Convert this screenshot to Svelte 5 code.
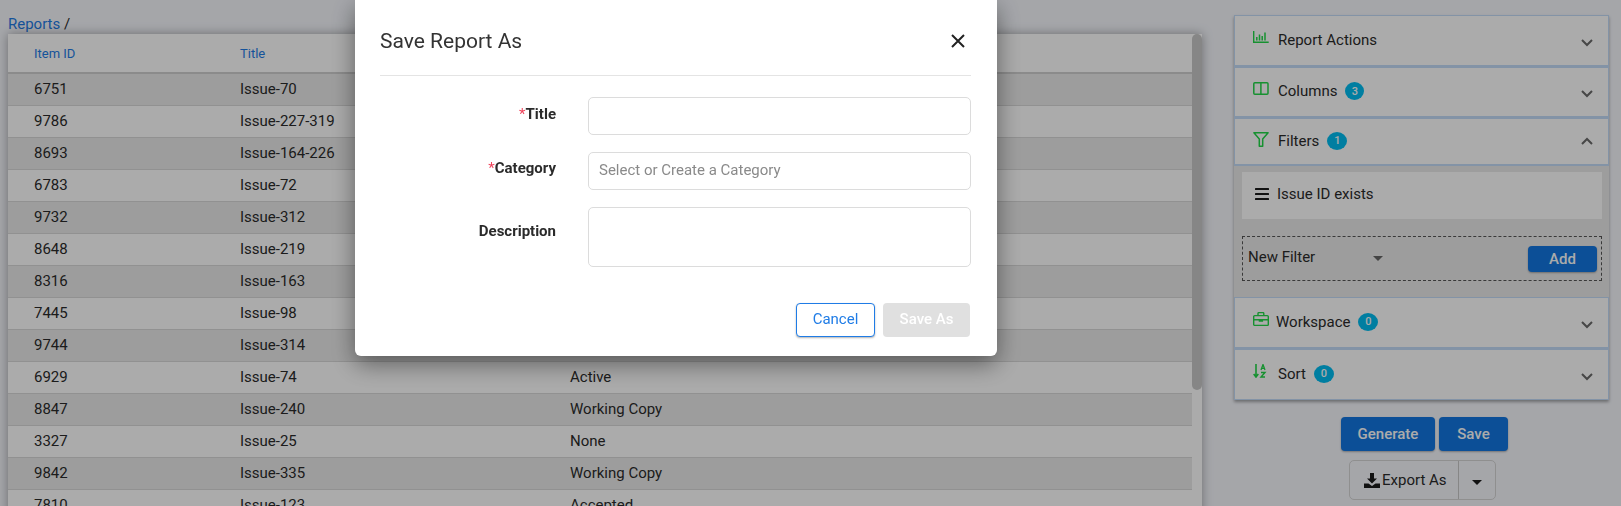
<script>
  const rows = [
    ['6751', 'Issue-70', 'Active'],
    ['9786', 'Issue-227-319', 'Working Copy'],
    ['8693', 'Issue-164-226', 'Working Copy'],
    ['6783', 'Issue-72', 'Active'],
    ['9732', 'Issue-312', 'None'],
    ['8648', 'Issue-219', 'Accepted'],
    ['8316', 'Issue-163', 'Active'],
    ['7445', 'Issue-98', 'None'],
    ['9744', 'Issue-314', 'Working Copy'],
    ['6929', 'Issue-74', 'Active'],
    ['8847', 'Issue-240', 'Working Copy'],
    ['3327', 'Issue-25', 'None'],
    ['9842', 'Issue-335', 'Working Copy'],
    ['7810', 'Issue-123', 'Accepted']
  ];
</script>

{#snippet chevron(up)}
  <svg class="chev" class:up width="12" height="8" viewBox="0 0 12 8">
    <path d={up ? 'M1 7l5-5 5 5' : 'M1 1l5 5 5-5'} fill="none" stroke="#6a6a6a" stroke-width="2" />
  </svg>
{/snippet}

<div class="page">
  <main class="content">
    <div class="crumb"><a href="#reports">Reports</a> <span>/</span></div>
    <div class="table-wrap">
      <div class="scrollbar"></div>
      <table>
        <thead>
          <tr><th class="c1">Item ID</th><th class="c2">Title</th><th></th></tr>
        </thead>
        <tbody>
          {#each rows as r}
            <tr><td class="c1">{r[0]}</td><td class="c2">{r[1]}</td><td>{r[2]}</td></tr>
          {/each}
        </tbody>
      </table>
    </div>
  </main>

  <aside class="side">
    <div class="acc">
      <div class="acc-head">
        <svg class="ico" width="16" height="12" viewBox="0 0 16 12" fill="none" stroke="#22d848">
          <path d="M.7 0v11.300h15" stroke-width="1.400" />
          <path d="M3.800 6v3.500M6.500 3.500v6M9.200 5v4.500M12 1.500v8" stroke-width="1.500" />
        </svg>
        <span class="lbl">Report Actions</span>
        {@render chevron(false)}
      </div>
      <div class="acc-head">
        <svg class="ico" width="16" height="13" viewBox="0 0 16 13" fill="none" stroke="#22d848" stroke-width="1.500">
          <rect x=".8" y=".8" width="14.200" height="11.400" rx="1" />
          <path d="M7.900 .8v11.400" />
        </svg>
        <span class="lbl">Columns</span>
        <span class="badge">3</span>
        {@render chevron(false)}
      </div>
      <div class="acc-head short">
        <svg class="ico filter" width="16" height="15" viewBox="0 0 16 15" fill="none" stroke="#22d848" stroke-width="1.500">
          <path d="M.9 .8h14.200l-5.400 6.100v7.300H6.300V6.900z" stroke-linejoin="round" />
        </svg>
        <span class="lbl">Filters</span>
        <span class="badge wide">1</span>
        {@render chevron(true)}
      </div>
      <div class="acc-body">
        <div class="filter-item">
          <svg width="14" height="12" viewBox="0 0 14 12" fill="#1c1c1c">
            <rect y="0" width="14" height="2" rx=".5" /><rect y="5" width="14" height="2" rx=".5" /><rect y="10" width="14" height="2" rx=".5" />
          </svg>
          <span>Issue ID exists</span>
        </div>
        <div class="new-filter">
          <span class="nf-label">New Filter</span>
          <span class="caret grey"></span>
          <button class="btn primary add">Add</button>
        </div>
      </div>
      <div class="acc-head">
        <svg class="ico" width="16" height="14" viewBox="0 0 16 14" fill="none" stroke="#22d848" stroke-width="1.400">
          <rect x=".7" y="3.600" width="14.600" height="9.800" rx="1" />
          <path d="M5 3.600V1.600q0-1 1-1h3.800q1 0 1 1v2M.7 7.800h14.600" />
          <path d="M6.400 7v2h3V7" fill="#22d848" />
        </svg>
        <span class="lbl tight">Workspace</span>
        <span class="badge wide">0</span>
        {@render chevron(false)}
      </div>
      <div class="acc-head last">
        <svg class="ico" width="16" height="14" viewBox="0 0 16 14" fill="none" stroke="#22d848">
          <path d="M3 0v12.500M.7 10l2.300 3 2.300-3" stroke-width="1.600" />
          <path d="M8 6l2-5.500L12 6M8.700 4.300h2.600" stroke-width="1.300" />
          <path d="M8 8.500h4l-4 4.500h4" stroke-width="1.400" />
        </svg>
        <span class="lbl">Sort</span>
        <span class="badge wide">0</span>
        {@render chevron(false)}
      </div>
    </div>

    <div class="actions">
      <button class="btn primary gen">Generate</button>
      <button class="btn primary sav">Save</button>
    </div>
    <div class="export">
      <button class="exp-main">
        <svg width="16" height="15" viewBox="0 0 16 15" fill="#1c1c1c">
          <path d="M6 0h4v5.500h3L8 10.500 3 5.500h3z" />
          <path d="M0 10.500h4.500L8 13l3.500-2.500H16V15H0z" />
        </svg>
        <span>Export As</span>
      </button>
      <button class="exp-drop"><span class="caret"></span></button>
    </div>
  </aside>
</div>

<div class="overlay">
  <div class="modal">
    <header>
      <h2>Save Report As</h2>
      <svg width="14" height="14" viewBox="0 0 14 14">
        <path d="M1 1l12 12M13 1L1 13" stroke="#222" stroke-width="2" />
      </svg>
    </header>
    <form class="form">
      <label class="fl" for="t"><em>*</em>Title</label>
      <input id="t" />
      <label class="fl cat" for="c"><em>*</em>Category</label>
      <input id="c" placeholder="Select or Create a Category" />
      <label class="fl desc" for="d">Description</label>
      <textarea id="d"></textarea>
    </form>
    <footer>
      <button class="cancel">Cancel</button>
      <button class="saveas">Save As</button>
    </footer>
  </div>
</div>

<style>
  :global(body) {
    margin: 0;
    overflow: hidden;
    background: #f6f8fd;
    font-family: Roboto, sans-serif;
    font-size: 15px;
    color: #2b2b2b;
  }

  button {
    font-family: inherit;
    font-size: 15px;
    border: none;
    padding: 0;
  }

  .page {
    display: flex;
    height: 506px;
    overflow: hidden;
  }

  .content {
    width: 1194px;
    margin-left: 8px;
    flex: none;
  }

  .crumb {
    height: 34px;
    padding-top: 15px;
    box-sizing: border-box;
    line-height: 18px;
  }

  .crumb a {
    color: #1f7ce6;
    text-decoration: none;
  }

  .table-wrap {
    position: relative;
    width: 1194px;
    background: #fff;
    box-shadow: 0 0 10px rgba(0, 0, 0, 0.35);
  }

  .scrollbar {
    position: absolute;
    right: 0;
    top: 0;
    width: 10px;
    height: 356px;
    border-radius: 5px;
    background: #c8c8c8;
  }

  table {
    width: 1184px;
    border-collapse: collapse;
    table-layout: fixed;
  }

  th {
    height: 39px;
    padding: 0;
    font-size: 13px;
    font-weight: 400;
    color: #1f7ce6;
    text-align: left;
    border-bottom: 2px solid #d0d0d0;
    box-sizing: border-box;
  }

  td {
    height: 32px;
    padding: 0;
    border-bottom: 1px solid #d8d8d8;
    box-sizing: border-box;
  }

  tbody tr:nth-child(odd) {
    background: #ebebeb;
  }

  .c1 {
    width: 232px;
    padding-left: 26px;
    box-sizing: border-box;
  }

  .c2 {
    width: 330px;
  }

  .side {
    width: 375px;
    margin-left: 32px;
    flex: none;
    padding-top: 15px;
  }

  .acc {
    box-shadow: 0 2px 3px rgba(0, 0, 0, 0.35);
  }

  .acc-head {
    display: flex;
    align-items: center;
    height: 51.500px;
    box-sizing: border-box;
    padding: 0 15px 1px 18px;
    background: #fff;
    border: 1px solid #c4dcf8;
    border-bottom-width: 2px;
  }

  .acc-head.short {
    height: 48px;
    padding-bottom: 2px;
  }

  .acc-head.last {
    border-bottom-width: 1px;
  }

  .ico {
    flex: none;
    margin-top: -5px;
  }

  .ico.filter {
    margin-top: -3px;
  }

  .lbl {
    margin-left: 9px;
  }

  .lbl.tight {
    margin-left: 7px;
  }

  .badge {
    display: inline-flex;
    align-items: center;
    justify-content: center;
    width: 19px;
    height: 18px;
    margin-left: 8px;
    border-radius: 50%;
    background: #00bdf0;
    color: #fff;
    font-size: 11px;
    font-weight: 500;
  }

  .badge.wide {
    width: 20px;
  }

  .chev {
    margin-left: auto;
    margin-top: 6px;
  }

  .chev.up {
    margin-top: 0;
  }

  .acc-body {
    height: 131px;
    box-sizing: border-box;
    padding: 6px 7px 0 8px;
    background: #ebebeb;
  }

  .filter-item {
    display: flex;
    align-items: center;
    gap: 8px;
    height: 47px;
    padding-left: 13px;
    padding-bottom: 4px;
    box-sizing: border-box;
    background: #fff;
  }

  .new-filter {
    display: flex;
    align-items: center;
    height: 45px;
    margin-top: 17px;
    padding: 0 4px 0 5px;
    box-sizing: border-box;
    border: 1px dashed #555;
  }

  .nf-label {
    width: 125px;
    padding-bottom: 3px;
  }

  .caret {
    display: inline-block;
    border-left: 5px solid transparent;
    border-right: 5px solid transparent;
    border-top: 5.500px solid #1c1c1c;
  }

  .caret.grey {
    border-top-color: #666;
  }

  .btn {
    border-radius: 4px;
    box-shadow: 0 1px 2px rgba(0, 0, 0, 0.3);
  }

  .primary {
    background: #1277e1;
    color: #fff;
    font-weight: 500;
  }

  .add {
    width: 69px;
    height: 26px;
    margin-left: auto;
  }

  .actions {
    display: flex;
    justify-content: center;
    gap: 4px;
    margin-top: 17px;
    padding-left: 6px;
  }

  .gen {
    width: 94px;
    height: 34px;
  }

  .sav {
    width: 69px;
    height: 34px;
  }

  .export {
    display: flex;
    width: 147px;
    height: 40px;
    margin: 9px 0 0 115px;
    border: 1px solid #d5d5d5;
    border-radius: 5px;
    box-sizing: border-box;
  }

  .exp-main {
    display: flex;
    align-items: center;
    gap: 2px;
    width: 109px;
    padding-left: 14px;
    background: none;
    color: #2b2b2b;
    border-right: 1px solid #c8c8c8;
  }

  .exp-drop {
    flex: 1;
    background: none;
  }

  .overlay {
    position: fixed;
    inset: 0;
    padding-left: 355px;
    background: rgba(0, 0, 0, 0.33);
  }

  .modal {
    width: 642px;
    height: 356px;
    box-sizing: border-box;
    padding: 0 26px 0 25px;
    background: #fff;
    border-radius: 0 0 6px 6px;
    box-shadow: 0 8px 24px rgba(0, 0, 0, 0.45);
  }

  header {
    display: flex;
    align-items: center;
    justify-content: space-between;
    height: 76px;
    padding: 6px 6px 0 0;
    box-sizing: border-box;
    border-bottom: 1px solid #e4e4e4;
  }

  h2 {
    margin: 0;
    font-size: 21px;
    font-weight: 400;
    color: #333;
  }

  .form {
    display: grid;
    grid-template-columns: 176px 1fr;
    column-gap: 32px;
    row-gap: 17px;
    margin-top: 21px;
  }

  .fl {
    padding-top: 7px;
    line-height: 20px;
    font-weight: 700;
    text-align: right;
    color: #2b2b2b;
  }

  .fl.cat {
    padding-top: 6px;
  }

  .fl.desc {
    padding-top: 14px;
  }

  .fl em {
    color: #f0445c;
    font-style: normal;
    font-weight: 400;
  }

  input,
  textarea {
    display: block;
    width: 100%;
    height: 38px;
    padding: 0 10px 2px;
    box-sizing: border-box;
    border: 1px solid #dcdcdc;
    border-radius: 5px;
    font-family: inherit;
    font-size: 15px;
    resize: none;
    outline: none;
  }

  textarea {
    height: 60px;
  }

  input::placeholder {
    color: #8a8a8a;
  }

  footer {
    display: flex;
    justify-content: flex-end;
    gap: 8px;
    margin-top: 36px;
    padding-right: 1px;
  }

  .cancel {
    width: 79px;
    height: 34px;
    padding-bottom: 2px;
    background: #fff;
    color: #1f7ce6;
    border: 1px solid #1f7ce6;
    border-radius: 4px;
    box-shadow: 0 1px 2px rgba(0, 0, 0, 0.3);
  }

  .saveas {
    width: 87px;
    height: 34px;
    padding-bottom: 2px;
    background: #e0e0e0;
    color: #fff;
    font-weight: 500;
    border-radius: 4px;
  }
</style>
